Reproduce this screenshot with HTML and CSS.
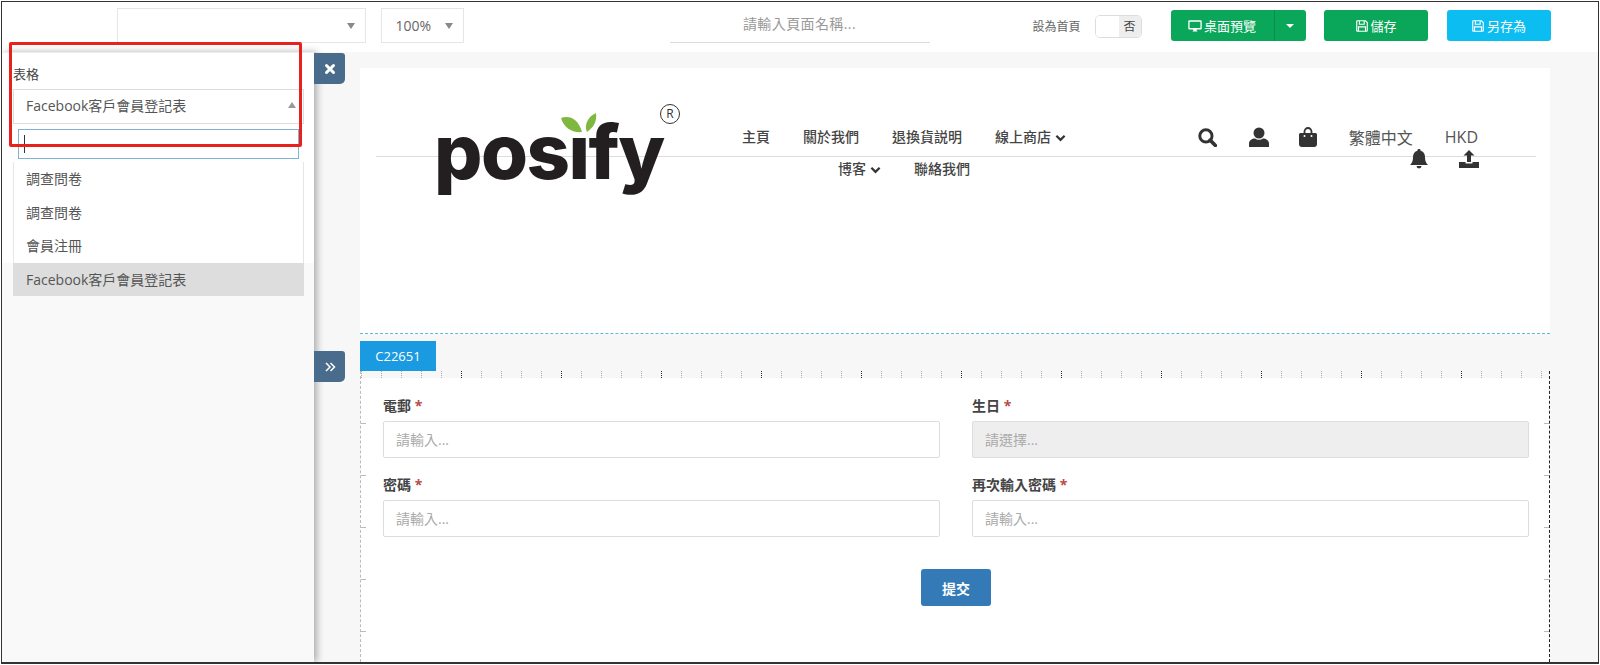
FILE: index.html
```html
<!DOCTYPE html>
<html lang="zh-Hant">
<head>
    <meta charset="UTF-8">
    <meta name="viewport" content="width=device-width, initial-scale=1.0">
    <title>Posify 頁面編輯</title>
    <link rel="stylesheet" href="styles.css">
</head>
<body>
<div class="frame">
    <!-- Top toolbar -->
    <header class="toolbar">
        <div class="tool-select tool-select-wide"><span></span><i class="caret-down"></i></div>
        <div class="tool-select tool-select-zoom"><span>100%</span><i class="caret-down"></i></div>
        <div class="page-name">請輸入頁面名稱...</div>
        <div class="home-label">設為首頁</div>
        <div class="toggle"><span class="toggle-knob"></span><span class="toggle-off">否</span></div>
        <div class="btn-group">
            <a class="btn btn-green btn-preview">
                <svg class="btn-icon" viewBox="0 0 16 16"><path d="M1.500 1.500h13a1.200 1.200 0 0 1 1.200 1.200v8.100a1.200 1.200 0 0 1-1.200 1.200H10v1.300l1 .9H5l1-.9V12H1.500a1.200 1.200 0 0 1-1.200-1.200V2.700a1.200 1.200 0 0 1 1.200-1.200zM1.800 3v7.300h12.400V3z" fill-rule="evenodd"/></svg>桌面預覽
            </a>
            <a class="btn btn-green btn-more"><i class="caret-white"></i></a>
        </div>
        <a class="btn btn-green btn-save">
            <svg class="btn-icon" viewBox="0 0 16 16"><path d="M2.500 2h9.500l2 2v9.500a.5.5 0 0 1-.5.5h-11a.5.5 0 0 1-.5-.5v-11a.5.5 0 0 1 .5-.5z M5 2.500v3.500h5.500V2.500 M4 14V9h8v5" fill="none" stroke="#fff" stroke-width="1.300"/></svg>儲存
        </a>
        <a class="btn btn-cyan btn-saveas">
            <svg class="btn-icon" viewBox="0 0 16 16"><path d="M2.500 2h9.500l2 2v9.500a.5.5 0 0 1-.5.5h-11a.5.5 0 0 1-.5-.5v-11a.5.5 0 0 1 .5-.5z M5 2.500v3.500h5.500V2.500 M4 14V9h8v5" fill="none" stroke="#fff" stroke-width="1.300"/></svg>另存為
        </a>
    </header>

    <div class="workspace">
        <!-- Left settings panel -->
        <aside class="panel">
            <div class="panel-top">
                <label class="panel-label">表格</label>
                <div class="combo">
                    <div class="combo-value"><span>Facebook客戶會員登記表</span><i class="caret-up"></i></div>
                    <div class="combo-search"><span class="text-caret"></span></div>
                    <ul class="combo-list">
                        <li>調查問卷</li>
                        <li>調查問卷</li>
                        <li>會員注冊</li>
                        <li class="selected">Facebook客戶會員登記表</li>
                    </ul>
                </div>
            </div>
            <a class="panel-tab panel-tab-close">
                <svg viewBox="0 0 12 12"><path d="M2.500 2.500l7 7M9.500 2.500l-7 7" stroke="#fff" stroke-width="3" stroke-linecap="round"/></svg>
            </a>
            <a class="panel-tab panel-tab-expand">
                <svg viewBox="0 0 12 12"><path d="M2 2l4 4-4 4M6.500 2l4 4-4 4" fill="none" stroke="#fff" stroke-width="1.500"/></svg>
            </a>
        </aside>

        <main class="main">
            <!-- Shop header preview -->
            <section class="shop-head">
                <div class="logo">
                    <!-- dotless i, the leaves take the place of the dot -->
                    <span class="logo-text" aria-label="posify">posıfy</span>
                    <svg class="logo-leaf" viewBox="0 0 36 20">
                        <path d="M0 5C8 2 17 5 21 19 11 20 3 15 0 5z" fill="#7fb83f"/>
                        <path d="M35 0c1 8-2 14-9 19-3-6 0-15 9-19z" fill="#7fb83f"/>
                    </svg>
                    <span class="logo-reg">R</span>
                </div>
                <ul class="shop-nav">
                    <li>主頁</li>
                    <li>關於我們</li>
                    <li>退換貨説明</li>
                    <li>線上商店<svg class="chev" viewBox="0 0 12 8"><path d="M1.500 1.500L6 6l4.500-4.500" fill="none" stroke="#333" stroke-width="2.400"/></svg></li>
                    <li>博客<svg class="chev" viewBox="0 0 12 8"><path d="M1.500 1.500L6 6l4.500-4.500" fill="none" stroke="#333" stroke-width="2.400"/></svg></li>
                    <li>聯絡我們</li>
                </ul>
                <div class="shop-tools">
                    <div class="tools-row">
                        <svg class="ico ico-search" viewBox="0 0 18 18"><circle cx="7.500" cy="7.500" r="5.800" fill="none" stroke="#333" stroke-width="2.800"/><path d="M11.500 11.500L16.500 16.500" stroke="#333" stroke-width="3.400" stroke-linecap="round"/></svg>
                        <svg class="ico ico-user" viewBox="0 0 20 20"><circle cx="10" cy="6" r="5.500" fill="#333"/><path d="M0 20v-3.500C0 13.500 3 11.500 6 11.500c1.200.9 2.500 1.300 4 1.300s2.800-.4 4-1.300c3 0 6 2 6 5V20z" fill="#333"/></svg>
                        <svg class="ico ico-bag" viewBox="0 0 18 20"><path d="M1.500 6h15A1.500 1.500 0 0 1 18 7.500V17a3 3 0 0 1-3 3H3a3 3 0 0 1-3-3V7.500A1.500 1.500 0 0 1 1.500 6z" fill="#333"/><path d="M5.500 9V4.500a3.500 3.500 0 0 1 7 0V9" fill="none" stroke="#333" stroke-width="1.800"/><circle cx="5.500" cy="9" r="1" fill="#fff"/><circle cx="12.500" cy="9" r="1" fill="#fff"/></svg>
                        <span class="lang">繁體中文</span>
                        <span class="currency">HKD</span>
                    </div>
                    <div class="tools-row tools-row-second">
                        <svg class="ico ico-bell" viewBox="0 0 18 20"><path d="M9 0a1.500 1.500 0 0 1 1.500 1.800C13.500 2.500 15 5 15 8c0 4 1 6 3 8H0c2-2 3-4 3-8 0-3 1.500-5.500 4.500-6.200A1.500 1.500 0 0 1 9 0zM6.500 17h5a2.500 2.500 0 0 1-5 0z" fill="#333"/></svg>
                        <svg class="ico ico-upload" viewBox="0 0 20 18"><path d="M10 0l5.500 5.500H12V12H8V5.500H4.500z" fill="#333"/><path d="M0 12h6.500v1.500h7V12H20v6H0z" fill="#333"/></svg>
                    </div>
                </div>
            </section>

            <div class="block-tag">C22651</div>

            <!-- Registration form block -->
            <section class="form-block">
                <form class="form-grid">
                    <div class="field">
                        <label>電郵 <em>*</em></label>
                        <input type="text" placeholder="請輸入...">
                    </div>
                    <div class="field">
                        <label>生日 <em>*</em></label>
                        <input type="text" placeholder="請選擇..." disabled>
                    </div>
                    <div class="field">
                        <label>密碼 <em>*</em></label>
                        <input type="text" placeholder="請輸入...">
                    </div>
                    <div class="field">
                        <label>再次輸入密碼 <em>*</em></label>
                        <input type="text" placeholder="請輸入...">
                    </div>
                </form>
                <div class="form-actions"><button type="button" class="btn-submit">提交</button></div>
            </section>
        </main>
    </div>

    <!-- Annotation drawn on the screenshot -->
    <div class="red-box"></div>
</div>
</body>
</html>
```

FILE: styles.css
```css
* {
    box-sizing: border-box;
}
html, body {
    margin: 0;
    height: 100%;
    overflow: hidden;
    background: #fff;
}
body {
    padding: 1px;
    font-family: "Open Sans", "Noto Sans CJK TC", sans-serif;
    font-size: 14px;
    color: #555;
}
ul {
    list-style: none;
    margin: 0;
    padding: 0;
}
.frame {
    position: relative;
    display: flex;
    flex-direction: column;
    height: 663px;
    border: 1.5px solid #333;
    border-bottom-width: 2px;
    overflow: hidden;
}

/* toolbar */
.toolbar {
    display: flex;
    align-items: flex-start;
    height: 50px;
    flex: none;
    padding: 6px 0 0 114.5px;
    background: #fff;
}
.tool-select {
    display: flex;
    align-items: center;
    justify-content: space-between;
    height: 35px;
    padding: 0 10px 0 14px;
    border: 1px solid #e6e6e6;
    color: #666;
}
.tool-select-wide {
    width: 249px;
}
.tool-select-zoom {
    width: 83px;
    margin-left: 15px;
}
.caret-down {
    border-left: 4px solid transparent;
    border-right: 4px solid transparent;
    border-top: 6px solid #888;
}
.page-name {
    width: 260px;
    height: 35px;
    margin-left: 206px;
    padding-top: 5px;
    border-bottom: 1px solid #ddd;
    color: #999;
    text-align: center;
    letter-spacing: 0.4px;
}
.home-label {
    margin: 9px 0 0 103px;
    font-size: 12px;
    color: #666;
}
.toggle {
    display: flex;
    width: 47px;
    height: 23px;
    margin: 7px 0 0 14px;
    border: 1px solid #ddd;
    border-radius: 5px;
    overflow: hidden;
    font-size: 12px;
    line-height: 21px;
}
.toggle-knob {
    flex: 1;
    background: #fff;
}
.toggle-off {
    width: 22px;
    background: #eee;
    color: #444;
    text-align: center;
}
.btn-group {
    display: flex;
    margin: 2px 0 0 29px;
}
.btn {
    display: flex;
    align-items: center;
    justify-content: center;
    height: 31px;
    font-size: 13px;
    color: #fff;
    border-radius: 3px;
}
.btn-green {
    background: #0aa65a;
}
.btn-cyan {
    background: #0bbdf0;
}
.btn-icon {
    width: 14px;
    height: 14px;
    margin-right: 2px;
    fill: #fff;
}
.btn-preview {
    width: 104px;
    border-radius: 3px 0 0 3px;
    border-right: 1px solid #088d4c;
}
.btn-more {
    width: 31px;
    border-radius: 0 3px 3px 0;
}
.caret-white {
    border-left: 4px solid transparent;
    border-right: 4px solid transparent;
    border-top: 4px solid #fff;
}
.btn-save {
    width: 104px;
    margin: 2px 0 0 18px;
}
.btn-saveas {
    width: 104px;
    margin: 2px 0 0 19px;
}

/* layout below the toolbar */
.workspace {
    display: flex;
    flex: 1;
    min-height: 0;
    background: #f7f7f7;
}
.panel {
    position: relative;
    flex: none;
    width: 312px;
    background: #f9f9f9;
    box-shadow: 3px 0 7px rgba(0, 0, 0, 0.3);
    z-index: 1;
}
.panel-top {
    height: 211px;
    padding-top: 11px;
    background: #fff;
    border-top: 1px solid #eee;
}
.panel-label {
    display: block;
    margin-left: 11px;
    height: 25px;
    font-size: 13px;
    color: #444;
}
.combo {
    margin-left: 11px;
    width: 291px;
    height: 209px;
}
.combo-value {
    display: flex;
    align-items: center;
    justify-content: space-between;
    height: 35px;
    padding: 0 7px 3px 12px;
    border: 1px solid #ddd;
    background: #fff;
}
.caret-up {
    border-left: 4px solid transparent;
    border-right: 4px solid transparent;
    border-bottom: 6px solid #999;
}
.combo-search {
    position: relative;
    display: flex;
    align-items: center;
    height: 30px;
    margin: 5px 5px 3px;
    padding-left: 5px;
    border: 1px solid #7fb2d4;
}
.text-caret {
    width: 1px;
    height: 18px;
    background: #333;
}
.combo-list {
    position: relative;
    background: #fff;
}
.combo-list li {
    height: 33.500px;
    line-height: 33.500px;
    padding-left: 12px;
    border-left: 1px solid #e6e6e6;
    border-right: 1px solid #e6e6e6;
}
.combo-list li.selected {
    background: #ddd;
    border-color: #ddd;
}
.panel-tab {
    position: absolute;
    left: 312px;
    display: flex;
    align-items: center;
    justify-content: center;
    width: 31px;
    height: 31px;
    background: #4a6c8c;
    border-radius: 0 3px 5px 0;
}
.panel-tab svg {
    width: 12px;
    height: 12px;
}
.panel-tab-close {
    top: 1px;
}
.panel-tab-expand {
    top: 299px;
}

/* main canvas */
.main {
    flex: 1;
    min-width: 0;
    padding: 16px 48px 0 46px;
    display: flex;
    flex-direction: column;
}
.shop-head {
    position: relative;
    display: flex;
    align-items: flex-start;
    flex: none;
    height: 266px;
    background: #fff;
    border-bottom: 1px dashed #5fbcd6;
}
.shop-head::after {
    content: "";
    position: absolute;
    left: 16px;
    right: 14px;
    top: 88px;
    border-top: 1px solid #ddd;
}
.logo {
    position: relative;
    flex: none;
    width: 240px;
    height: 110px;
    margin: 39px 0 0 77px;
    z-index: 1;
}
.logo-text {
    position: absolute;
    left: -3px;
    top: 19px;
    font-family: Inter, sans-serif;
    font-size: 76px;
    font-weight: 800;
    line-height: 50px;
    letter-spacing: -1.5px;
    color: #231f20;
}
.logo-leaf {
    position: absolute;
    left: 124px;
    top: 6px;
    width: 36px;
    height: 20px;
}
.logo-reg {
    position: absolute;
    left: 223px;
    top: -3px;
    width: 20px;
    height: 20px;
    border: 1.500px solid #333;
    border-radius: 50%;
    font-size: 12px;
    line-height: 17px;
    text-align: center;
    color: #333;
}
.shop-nav {
    display: flex;
    flex-wrap: wrap;
    justify-content: center;
    column-gap: 33px;
    width: 340px;
    margin: 53px 0 0 57px;
    font-weight: 500;
    color: #444;
    line-height: 32px;
    position: relative;
    z-index: 1;
}
.chev {
    width: 11px;
    height: 8px;
    margin-left: 4px;
}
.shop-tools {
    margin: 54px 72px 0 auto;
    position: relative;
    z-index: 1;
}
.tools-row {
    display: flex;
    align-items: center;
    height: 30px;
}
.tools-row-second {
    justify-content: flex-end;
    height: 20px;
    margin: -3px -1px 0 0;
}
.ico {
    flex: none;
}
.ico-search {
    width: 19px;
    height: 19px;
    margin-right: -1px;
    transform: translateX(-2px);
}
.ico-user {
    width: 20px;
    height: 20px;
    margin-left: 31px;
}
.ico-bag {
    width: 18px;
    height: 20px;
    margin-left: 30px;
}
.lang {
    margin-left: 32px;
    font-size: 16px;
    color: #555;
}
.currency {
    margin-left: 32px;
    font-size: 16px;
    color: #555;
}
.ico-bell {
    width: 18px;
    height: 20px;
}
.ico-upload {
    width: 20px;
    height: 18px;
    margin: 0 0 0 31px;
}
.block-tag {
    flex: none;
    align-self: flex-start;
    width: 76px;
    height: 30px;
    margin-top: 7px;
    background: #1a9ae0;
    color: #fff;
    font-size: 13px;
    line-height: 30px;
    text-align: center;
}

/* form block with its ruler marks */
.form-block {
    flex: 1;
    position: relative;
    padding: 24px 20px 0 22px;
    background:
        repeating-linear-gradient(180deg, transparent 0 1px, #f7f7f7 1px 2px) 0 0 / 100% 7px no-repeat,
        repeating-linear-gradient(90deg, #222 0 1px, transparent 1px 100px) 100px 0 / 100% 7px no-repeat,
        repeating-linear-gradient(90deg, #aaa 0 1px, transparent 1px 20px) 0 0 / 100% 7px no-repeat,
        repeating-linear-gradient(180deg, #bbb 0 1px, transparent 1px 52px) 0 52px / 5px 100% no-repeat,
        repeating-linear-gradient(180deg, #bbb 0 1px, transparent 1px 52px) 100% 52px / 5px 100% no-repeat,
        linear-gradient(#f7f7f7, #f7f7f7) 0 0 / 100% 7px no-repeat,
        #fff;
    border-left: 1px dashed #bbb;
    border-right: 1px dashed #222;
}
.form-grid {
    display: grid;
    grid-template-columns: 1fr 1fr;
    column-gap: 32px;
    row-gap: 16px;
}
.field label {
    display: block;
    height: 26px;
    font-weight: 700;
    color: #444;
    line-height: 22px;
}
.field em {
    font-style: normal;
    color: #b94a48;
}
.field input {
    display: block;
    width: 100%;
    height: 37px;
    padding: 0 12px;
    border: 1px solid #ddd;
    border-radius: 2px;
    background: #fff;
    font: inherit;
}
.field input::placeholder {
    color: #aaa;
}
.field input:disabled {
    background: #eee;
}
.form-actions {
    display: flex;
    justify-content: center;
    margin-top: 32px;
}
.btn-submit {
    width: 70px;
    height: 37px;
    border: 0;
    border-radius: 3px;
    background: #337ab7;
    color: #fff;
    font: inherit;
    font-weight: 700;
}
.red-box {
    position: absolute;
    left: 6.500px;
    top: 39.500px;
    width: 293px;
    height: 105px;
    border: 3px solid #e8211d;
    border-radius: 2px;
    z-index: 5;
}
```
